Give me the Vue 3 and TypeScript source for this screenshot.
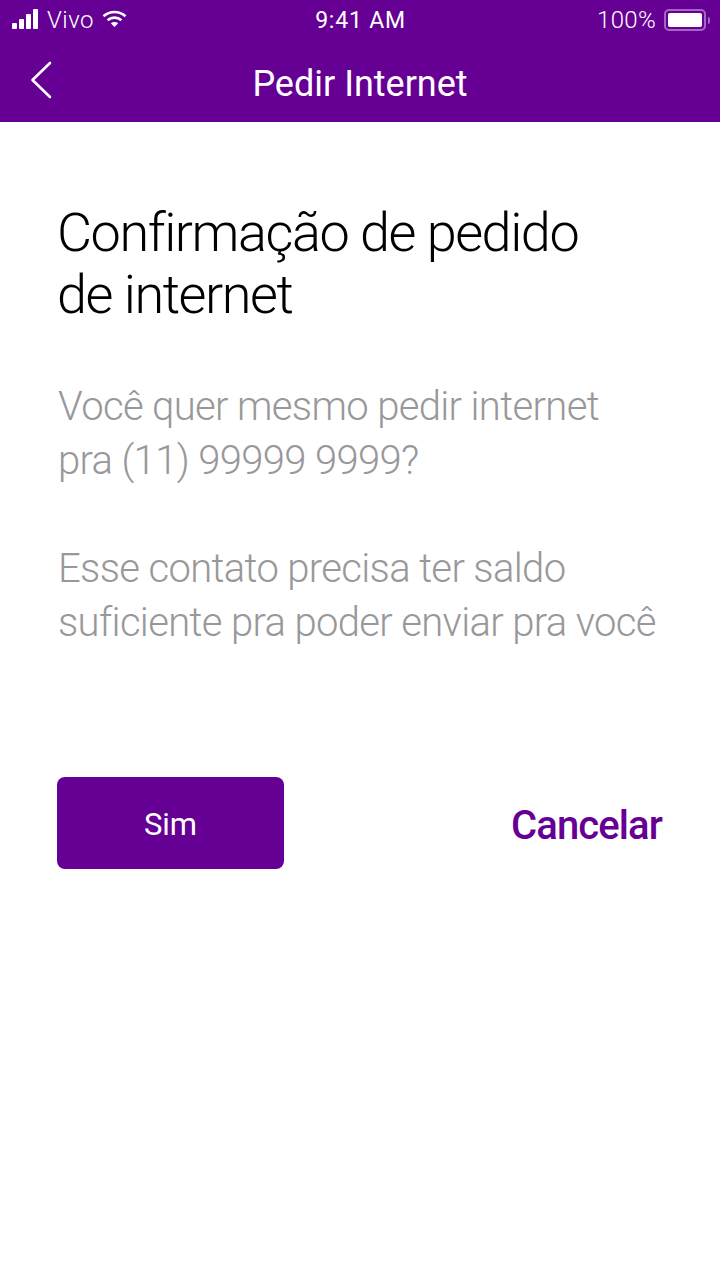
<script setup lang="ts">
const bars = [6, 10, 15, 20]
</script>

<template>
  <div class="screen">
    <header class="topbar">
      <div class="status">
        <div class="status-left">
          <div class="signal">
            <span v-for="h in bars" :key="h" class="bar" :style="{ height: h + 'px' }"></span>
          </div>
          <span class="carrier">Vivo</span>
          <svg class="wifi" width="25" height="18" viewBox="0 0 25 18">
            <path d="M1.5 6.2C7.8.6 17.2.6 23.5 6.2" fill="none" stroke="#fff" stroke-width="2.6" />
            <path d="M5.6 10.2c4-3.4 9.8-3.4 13.8 0" fill="none" stroke="#fff" stroke-width="2.6" />
            <path d="M8.8 13.2c2.2-1.7 5.2-1.7 7.4 0L12.5 17z" fill="#fff" />
          </svg>
        </div>
        <span class="time">9:41 AM</span>
        <div class="status-right">
          <span class="percent">100%</span>
          <div class="battery"><div class="battery-fill"></div></div>
          <div class="battery-tip"></div>
        </div>
      </div>
      <div class="navbar">
        <svg class="back" width="24" height="38" viewBox="0 0 24 38">
          <path d="M21 2L3.5 19 21 36" fill="none" stroke="#fff" stroke-width="2.6" stroke-linecap="round" stroke-linejoin="round" />
        </svg>
        <h1 class="nav-title">Pedir Internet</h1>
      </div>
    </header>

    <main class="content">
      <h2 class="title">Confirmação de pedido<br />de internet</h2>
      <p class="text">Você quer mesmo pedir internet<br />pra (11) 99999 9999?</p>
      <p class="text second">Esse contato precisa ter saldo<br />suficiente pra poder enviar pra você</p>
      <div class="actions">
        <button class="btn-yes">Sim</button>
        <button class="btn-cancel">Cancelar</button>
      </div>
    </main>
  </div>
</template>

<style>
html,
body {
  margin: 0;
  background: #fff;
}
</style>

<style scoped>
.screen {
  width: 720px;
  height: 1280px;
  background: #fff;
  font-family: Roboto, "Liberation Sans", sans-serif;
  overflow: hidden;
}

.topbar {
  background: #660094;
  height: 122px;
  color: #fff;
}

.status {
  height: 40px;
  display: flex;
  align-items: center;
  justify-content: space-between;
  padding: 0 10px 0 12px;
  position: relative;
}

.status-left {
  display: flex;
  align-items: center;
}

.signal {
  display: flex;
  align-items: flex-end;
  gap: 2px;
  height: 20px;
  margin-top: -2px;
}

.bar {
  width: 5px;
  background: #fff;
  border-radius: 1px;
}

.carrier {
  font-size: 24px;
  font-weight: 300;
  margin-left: 9px;
  letter-spacing: 0.5px;
}

.wifi {
  margin-left: 8px;
  margin-top: -3px;
}

.time {
  position: absolute;
  left: 1px;
  right: 0;
  text-align: center;
  font-size: 23px;
  font-weight: 400;
  letter-spacing: 0.8px;
}

.status-right {
  display: flex;
  align-items: center;
}

.percent {
  font-size: 24px;
  font-weight: 300;
  letter-spacing: 0.3px;
  margin-right: 8px;
}

.battery {
  width: 42px;
  height: 22px;
  box-sizing: border-box;
  border: 2px solid #a565c4;
  border-radius: 5px;
  padding: 2px;
}

.battery-fill {
  width: 100%;
  height: 100%;
  background: #fff;
  border-radius: 2px;
}

.battery-tip {
  width: 2px;
  height: 7px;
  margin-left: 2px;
  background: #a565c4;
  border-radius: 0 2px 2px 0;
}

.navbar {
  height: 82px;
  position: relative;
  display: flex;
  align-items: center;
  justify-content: center;
}

.back {
  position: absolute;
  left: 29px;
  top: 21px;
}

.nav-title {
  margin: 0;
  font-size: 36px;
  font-weight: 400;
  line-height: 1;
  margin-top: 6px;
}

.content {
  padding: 80px 58px 0 57px;
}

.title {
  margin: 0;
  font-size: 54px;
  font-weight: 300;
  line-height: 62px;
  color: #000;
  letter-spacing: -1.45px;
}

.text {
  margin: 54px 0 0 1px;
  font-size: 40px;
  font-weight: 300;
  line-height: 54px;
  letter-spacing: -0.65px;
  color: #98989a;
}

.second {
  margin-top: 54px;
}

.actions {
  margin-top: 127px;
  display: flex;
  align-items: center;
  justify-content: space-between;
}

.btn-yes {
  width: 227px;
  height: 92px;
  border: 0;
  padding: 2px 0 0;
  border-radius: 8px;
  background: #660094;
  color: #fff;
  font-family: inherit;
  font-size: 31px;
  font-weight: 400;
}

.btn-cancel {
  border: 0;
  padding: 0;
  background: none;
  color: #660094;
  font-family: inherit;
  font-size: 40px;
  font-weight: 500;
  letter-spacing: -0.9px;
  margin-top: 5px;
}
</style>
